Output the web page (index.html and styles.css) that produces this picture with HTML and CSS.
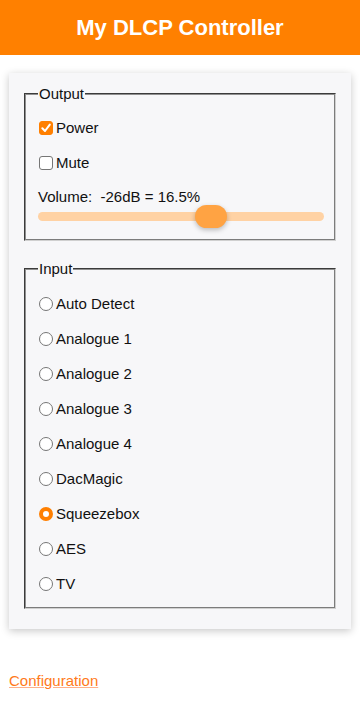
FILE: index.html
```
<!DOCTYPE html>
<html>
<head>
    <meta charset="utf-8" />
    <title>My DLCP Controller</title>
    <link rel="stylesheet" href="styles.css">
</head>
<body>
    <header class="top-bar">
        <h1>My DLCP Controller</h1>
    </header>

    <main class="panel">
        <fieldset class="group">
            <legend>Output</legend>
            <label class="row">
                <input type="checkbox" checked />
                <span class="box"><svg viewBox="0 0 14 14"><path d="M3.3 7.3 L6 10 L10.8 3.6" /></svg></span>Power
            </label>
            <label class="row">
                <input type="checkbox" />
                <span class="box"><svg viewBox="0 0 14 14"><path d="M3.3 7.3 L6 10 L10.8 3.6" /></svg></span>Mute
            </label>
            <p class="volume-label">Volume:&nbsp; -26dB = 16.5%</p>
            <input type="range" class="volume" min="0" max="100" value="62" />
        </fieldset>

        <fieldset class="group input-group">
            <legend>Input</legend>
            <label class="row"><input type="radio" name="input" class="dot" />Auto Detect</label>
            <label class="row"><input type="radio" name="input" class="dot" />Analogue 1</label>
            <label class="row"><input type="radio" name="input" class="dot" />Analogue 2</label>
            <label class="row"><input type="radio" name="input" class="dot" />Analogue 3</label>
            <label class="row"><input type="radio" name="input" class="dot" />Analogue 4</label>
            <label class="row"><input type="radio" name="input" class="dot" />DacMagic</label>
            <label class="row"><input type="radio" name="input" class="dot" checked />Squeezebox</label>
            <label class="row"><input type="radio" name="input" class="dot" />AES</label>
            <label class="row"><input type="radio" name="input" class="dot" />TV</label>
        </fieldset>
    </main>

    <p class="footer-link"><a href="#">Configuration</a></p>
</body>
</html>
```

FILE: styles.css
```
body {
    margin: 0;
    font-family: "Liberation Sans", Arial, sans-serif;
    font-size: 15px;
    color: #111;
    background: #fff;
}

.top-bar {
    background-color: #ff8000;
    height: 55px;
}

.top-bar h1 {
    margin: 0;
    line-height: 55px;
    text-align: center;
    color: #fff;
    font-size: 22px;
    font-weight: bold;
}

.panel {
    margin: 18px 9px 0 9px;
    padding: 12px 13px 20px 13px;
    background-color: #f7f7f9;
    box-shadow: 0 2px 8px rgba(0, 0, 0, 0.22);
}

.group {
    margin: 0 2px;
    padding: 8px 12px 11px 12px;
    border: 2px groove #ddd;
    border-color: #8f8f8f #d0d0d0 #d0d0d0 #8f8f8f;
}

.group legend {
    padding: 0 1px;
    line-height: 17px;
}

.input-group {
    margin-top: 19px;
    padding-top: 9px;
    padding-bottom: 6px;
}

.row {
    display: flex;
    align-items: center;
    height: 35px;
}

/* checkbox: native input hidden, drawn box instead */
.row input[type="checkbox"] {
    display: none;
}

.box {
    width: 14px;
    height: 14px;
    margin: 0 3px 0 1px;
    box-sizing: border-box;
    border: 1px solid #767676;
    border-radius: 3px;
    background-color: #fff;
}

.box svg {
    display: none;
    width: 14px;
    height: 14px;
    margin: -1px;
}

.box path {
    fill: none;
    stroke: #fff;
    stroke-width: 2;
    stroke-linecap: round;
    stroke-linejoin: round;
}

input:checked + .box {
    border-color: #ff7f00;
    background-color: #ff7f00;
}

input:checked + .box svg {
    display: block;
}

.dot {
    -webkit-appearance: none;
    appearance: none;
    width: 14px;
    height: 14px;
    margin: 0 3px 0 1px;
    box-sizing: border-box;
    border: 1px solid #767676;
    border-radius: 50%;
    background-color: #fff;
}

.dot:checked {
    border: 4px solid #ff7f00;
}

.volume-label {
    margin: 8px 0 0 0;
    line-height: 17px;
}

.volume {
    -webkit-appearance: none;
    appearance: none;
    display: block;
    width: calc(100% + 2px);
    height: 23px;
    margin: 0;
    background: transparent;
}

.volume::-webkit-slider-runnable-track {
    height: 9px;
    border-radius: 5px;
    background-color: #ffd2a4;
}

.volume::-webkit-slider-thumb {
    -webkit-appearance: none;
    width: 32px;
    height: 23px;
    margin-top: -7px;
    border-radius: 12px;
    background-color: #ffa343;
    box-shadow: 0 2px 5px rgba(0, 0, 0, 0.25);
}

.footer-link {
    margin: 43px 0 0 9px;
    line-height: 17px;
}

.footer-link a {
    color: #ff7a1a;
    text-decoration-color: #ffb08a;
}
```
